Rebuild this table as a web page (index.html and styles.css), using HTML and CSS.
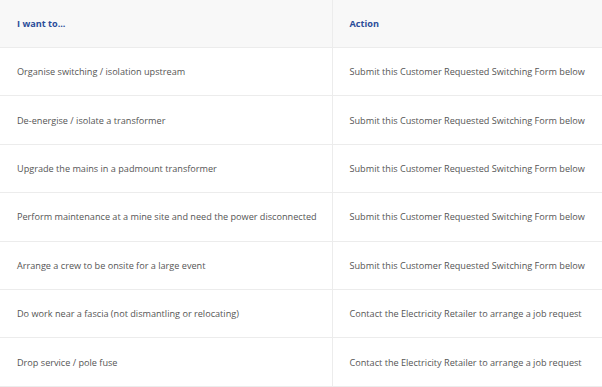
FILE: index.html
```html
<!DOCTYPE html>
<html lang="en">
<head>
<meta charset="utf-8">
<link rel="stylesheet" href="styles.css">
<title>Switching</title>
</head>
<body>
<table class="req-table">
  <thead>
    <tr><th class="col-want">I want to...</th><th class="col-action">Action</th></tr>
  </thead>
  <tbody>
    <tr><td>Organise switching / isolation upstream</td><td>Submit this Customer Requested Switching Form below</td></tr>
    <tr><td>De-energise / isolate a transformer</td><td>Submit this Customer Requested Switching Form below</td></tr>
    <tr><td>Upgrade the mains in a padmount transformer</td><td>Submit this Customer Requested Switching Form below</td></tr>
    <tr><td>Perform maintenance at a mine site and need the power disconnected</td><td>Submit this Customer Requested Switching Form below</td></tr>
    <tr><td>Arrange a crew to be onsite for a large event</td><td>Submit this Customer Requested Switching Form below</td></tr>
    <tr><td>Do work near a fascia (not dismantling or relocating)</td><td>Contact the Electricity Retailer to arrange a job request</td></tr>
    <tr><td>Drop service / pole fuse</td><td>Contact the Electricity Retailer to arrange a job request</td></tr>
  </tbody>
</table>
</body>
</html>
```
FILE: styles.css
```css
html, body {
  margin: 0;
  padding: 0;
  background: #ffffff;
}
body {
  font-family: "Open Sans", "Liberation Sans", sans-serif;
  font-size: 9.15px;
  color: #555555;
}
.req-table {
  width: 602px;
  border-collapse: collapse;
  table-layout: fixed;
}
.req-table th,
.req-table td {
  text-align: left;
  padding: 0 0 0 17px;
  vertical-align: middle;
  white-space: nowrap;
}
.req-table th {
  height: 47px;
  background: #f8f8f8;
  color: #2b4d9a;
  font-weight: 700;
  border-bottom: 1px solid #ececec;
}
.req-table td {
  height: 47.4px;
  border-bottom: 1px solid #ececec;
}
.col-want {
  width: 332px;
  box-sizing: border-box;
}
.req-table th + th,
.req-table td + td {
  border-left: 1px solid #ececec;
}
```
